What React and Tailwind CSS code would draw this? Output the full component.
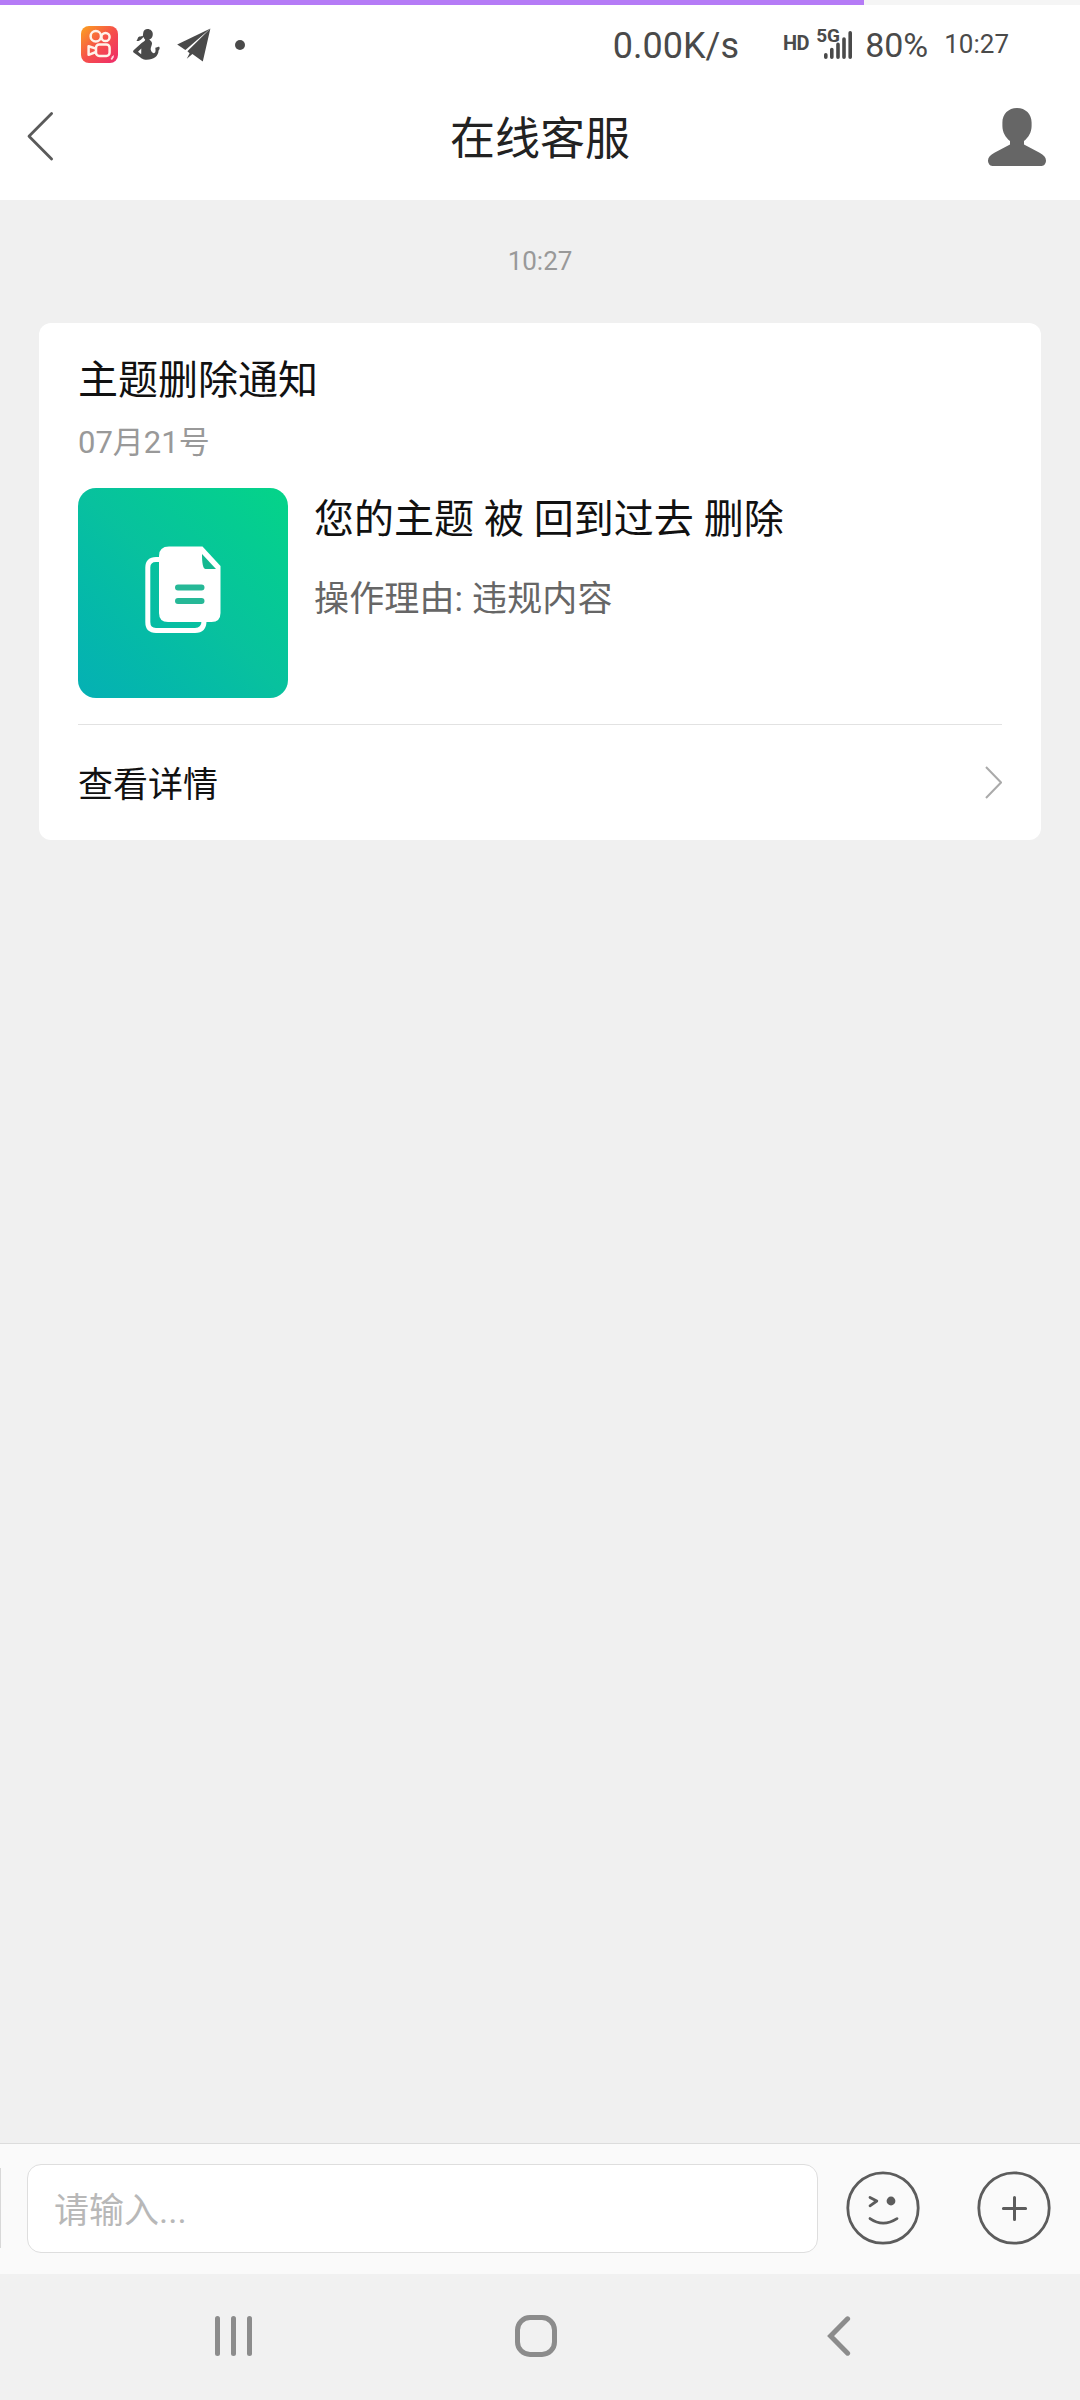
import { useState } from "react";

function KwaiLogo() {
    return (
        <svg className="w-[37px] h-[37px]" viewBox="0 0 37 37" fill="none">
            <defs>
                <linearGradient id="kwai" x1="0" y1="0" x2="1" y2="1">
                    <stop offset="0" stopColor="#fba31e" />
                    <stop offset="0.5" stopColor="#f6504a" />
                    <stop offset="1" stopColor="#ee2a6c" />
                </linearGradient>
            </defs>
            <rect width="37" height="37" rx="8" fill="url(#kwai)" />
            <g stroke="#fff3ea" strokeWidth="2.5">
                <circle cx="14.8" cy="10.3" r="5.2" />
                <circle cx="24.5" cy="11" r="4.1" />
                <rect x="15" y="18.5" width="13.6" height="11.4" rx="3.2" />
                <path d="M15 22.6 L7.6 20.2 V28.8 L15 26" strokeLinejoin="round" />
            </g>
            <path d="M31.4 30.2 L33 29 L32.6 31.6 L31 34 L29.6 33 Z" fill="#ffd9e2" />
        </svg>
    );
}

function PersonFigure() {
    return (
        <svg className="w-[27px] h-[31px]" viewBox="0 0 27 31" fill="#4a4a4a">
            <path d="M10.2 4 C10.4 1.4 12.3 0 14.5 0 C17.6 0 19.8 2.2 19.8 5 C19.8 7.8 18.7 10 16.4 10.3 C16.4 11.3 18.8 12.3 19 14 C19.2 16.2 17.5 18.6 17.7 20.6 C18 22.4 19.5 24.5 21 24.2 C22.9 23.8 22.6 20.8 22.3 18.8 C23.5 18.4 24.8 17.7 26.2 17.7 C27.2 19 26.4 20.6 25.5 21.8 C25.4 27 20.8 30.8 13.6 30.8 C9.8 30.8 8.6 29.2 6.8 28 L0.6 23.6 C-0.2 23 0 22 0.6 21.2 L8.6 14 C10 12.7 12 12.2 12.2 10.4 C11.2 9.8 10.8 9 10.6 8 C8.8 9.4 7.6 12.6 3.4 12 C4.6 11 4.4 8.2 6.4 7.5 C7.8 7.2 9 7.6 9.8 7 Z" />
            <path d="M8.3 19.4 L5 22.8 L8.2 25.2 Z" fill="#fff" />
        </svg>
    );
}

function PaperPlane() {
    return (
        <svg className="w-[34px] h-[34px]" viewBox="0 0 34 34" fill="#4a4a4a">
            <path d="M33.4 0.4 L0.2 16.4 L8.4 22 Z" />
            <path d="M33.4 0.4 L10.4 23.2 L12.6 25.2 L9.8 30.8 L15.4 26 L25.8 33.4 Z" />
        </svg>
    );
}

function StatusBar() {
    return (
        <div className="h-[80px] flex items-center justify-between pl-[81px] pr-[71px] pb-[1px] text-[#4a4a4a]">
            <div className="flex items-center">
                <KwaiLogo />
                <div className="ml-[15px]"><PersonFigure /></div>
                <div className="ml-[17px]"><PaperPlane /></div>
                <div className="ml-[24px] size-[10px] rounded-full bg-[#4a4a4a]"></div>
            </div>
            <div className="flex items-center whitespace-nowrap">
                <span className="text-[36px] leading-[38px] mt-[2px] mr-[44px]">0.00K/s</span>
                <span className="text-[20px] leading-5 font-bold tracking-[-0.5px] mb-[3px] mr-[7px]">HD</span>
                <div className="relative w-[37px] h-[30px] mr-[12px]">
                    <span className="absolute left-0 top-[-4px] text-[19px] leading-[19px] font-bold">5G</span>
                    <svg className="w-[37px] h-[30px]" viewBox="0 0 37 30" stroke="#4a4a4a" strokeWidth="3.6" strokeLinecap="round">
                        <path d="M9.8 24.8 V27.2 M15.8 19.6 V27.2 M22 14.4 V27.2 M28 9 V27.2 M34.2 2.8 V27.2" />
                    </svg>
                </div>
                <span className="text-[34px] leading-[34px] mr-[16px]">80%</span>
                <span className="text-[26px] leading-[26px] mb-[1px]">10:27</span>
            </div>
        </div>
    );
}

function Header() {
    return (
        <header className="h-[115px] flex items-center justify-between pl-[27px] pr-[34px] pb-[7px]">
            <button className="w-[58px]">
                <svg className="w-[27px] h-[50px] mb-[7px]" viewBox="0 0 27 50" fill="none" stroke="#5a5a5a" strokeWidth="2.8" strokeLinecap="round" strokeLinejoin="round">
                    <path d="M24.6 2.4 L2 25.2 L24.6 48" />
                </svg>
            </button>
            <h1 className="text-[45px] leading-[50px] text-[#222] mt-[2px] ml-[7px]">在线客服</h1>
            <button className="mb-[4px]">
                <svg className="w-[58px] h-[58px]" viewBox="0 0 58 58" fill="#666">
                    <path d="M29 0 C37.6 0 43.6 6.2 43.6 14.4 V18 C43.6 24.4 40.4 29.6 36 33 V36.4 L51.6 44.8 C55.6 47 58 49.4 58 52.6 C58 55.2 56.4 58 53.6 58 H4.4 C1.6 58 0 55.2 0 52.6 C0 49.4 2.4 47 6.4 44.8 L22 36.4 V33 C17.6 29.6 14.4 24.4 14.4 18 V14.4 C14.4 6.2 20.4 0 29 0 Z" />
                </svg>
            </button>
        </header>
    );
}

function DocumentTile() {
    return (
        <div className="size-[210px] shrink-0 rounded-[18px] bg-linear-to-tr from-[#05b0b4] via-[#08c19e] to-[#05d488] flex items-center justify-center">
            <svg className="w-[76px] h-[88px] mb-[7px]" viewBox="0 0 76 88" fill="none">
                <path d="M15 13.5 H11 Q2.8 13.5 2.8 21.5 V76 Q2.8 84.4 11 84.4 H50 Q59 84.4 59 75" stroke="#fff" strokeWidth="5" />
                <path d="M24 0.5 H57.5 L75.5 20 V67 Q75.5 76 66.5 76 H23 Q14 76 14 67 V10 Q14 0.5 24 0.5 Z" fill="#fff" />
                <path d="M57 8 Q57 23 60.5 23 H71 Z" fill="#14b890" />
                <path d="M33 41.5 H56.5 M33 55 H56.5" stroke="#26b897" strokeWidth="6" strokeLinecap="round" />
            </svg>
        </div>
    );
}

function NoticeCard() {
    return (
        <div className="w-[1002px] h-[517px] mx-auto rounded-[12px] bg-white px-[39px] flex flex-col">
            <h2 className="mt-[34px] text-[40px] leading-[48px] text-[#111]">主题删除通知</h2>
            <p className="mt-[18px] text-[31px] leading-[40px] text-[#999]">07月21号</p>
            <div className="mt-[25px] flex gap-[26px]">
                <DocumentTile />
                <div>
                    <p className="mt-[8px] text-[40px] leading-[48px] text-[#111]">您的主题 被 回到过去 删除</p>
                    <p className="mt-[36px] text-[35px] leading-[40px] tracking-[0.15px] text-[#666]">操作理由: 违规内容</p>
                </div>
            </div>
            <div className="mt-[26px] flex-1 border-t border-[#e2e2e2] flex items-center justify-between">
                <span className="mt-[7px] text-[35px] leading-[40px] text-[#111]">查看详情</span>
                <svg className="w-[17px] h-[33px]" viewBox="0 0 17 33" fill="none" stroke="#aaa" strokeWidth="2">
                    <path d="M1 1 L16 16.5 L1 32" />
                </svg>
            </div>
        </div>
    );
}

function InputBar() {
    const [text, setText] = useState("");

    return (
        <div className="h-[131px] flex items-center bg-[#fafafa] border-t border-[#dcdcdc] pb-[2px]">
            <div className="w-px h-[80px] bg-[#d8d8d8]"></div>
            <input
                value={text}
                onChange={(e) => setText(e.target.value)}
                placeholder="请输入..."
                className="ml-[26px] w-[791px] h-[89px] rounded-[14px] border border-[#dedede] bg-white pl-[26px] pt-[7px] text-[35px] text-[#111] placeholder:text-[#b8b8b8] outline-none"
            />
            <svg className="ml-[28px] w-[74px] h-[74px]" viewBox="0 0 74 74" fill="none" stroke="#5c5c5c" strokeWidth="2.8" strokeLinecap="round" strokeLinejoin="round">
                <circle cx="37" cy="37" r="35.2" />
                <path d="M24 26.5 L30.8 30 L24 34.8" />
                <circle cx="45" cy="30" r="4.4" fill="#5c5c5c" stroke="none" />
                <path d="M24 47.6 Q37 56.6 51 47.6" />
            </svg>
            <svg className="ml-[57px] w-[74px] h-[74px]" viewBox="0 0 74 74" fill="none" stroke="#5c5c5c" strokeWidth="2.8" strokeLinecap="round">
                <circle cx="37" cy="37" r="35.2" />
                <path d="M37.5 26.4 V48.6 M26.4 37.5 H48.6" strokeWidth="3" />
            </svg>
        </div>
    );
}

function NavBar() {
    return (
        <nav className="h-[126px] flex items-center justify-between pl-[215px] pr-[229px] pb-[2px] bg-[#f1f1f1]">
            <div className="flex gap-[11px] mr-[1px]">
                <div className="w-[5px] h-[40px] rounded-full bg-[#8c8c8c]"></div>
                <div className="w-[5px] h-[40px] rounded-full bg-[#8c8c8c]"></div>
                <div className="w-[5px] h-[40px] rounded-full bg-[#8c8c8c]"></div>
            </div>
            <div className="size-[42px] rounded-[15px] border-5 border-[#8c8c8c] mr-[8px]"></div>
            <svg className="w-[24px] h-[40px]" viewBox="0 0 24 40" fill="none" stroke="#8c8c8c" strokeWidth="5" strokeLinecap="round">
                <path d="M20.6 2.8 L3.6 20 L20.6 37.2" />
            </svg>
        </nav>
    );
}

function App() {
    return (
        <div className="w-[1080px] h-[2400px] flex flex-col overflow-hidden bg-[#f0f0f0] font-['Roboto','Noto_Sans_CJK_SC',sans-serif]">
            <div className="bg-white">
                {/* Page load progress */}
                <div className="h-[5px] bg-[#f5f5f5]">
                    <div className="h-full w-4/5 bg-[#b57bf6]"></div>
                </div>
                <StatusBar />
                <Header />
            </div>

            <main className="flex-1">
                <p className="pt-[48px] pb-[49px] text-center text-[26px] leading-[26px] text-[#999]">10:27</p>
                <NoticeCard />
            </main>

            <InputBar />
            <NavBar />
        </div>
    );
}

export default App;
